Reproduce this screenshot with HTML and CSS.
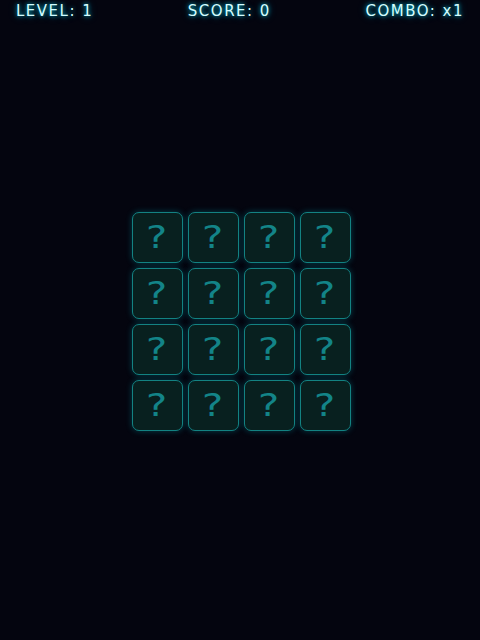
FILE: index.html
```html
<!DOCTYPE html>
<html>
<head>
<meta charset="utf-8">
<link rel="stylesheet" href="styles.css">
</head>
<body>
<div class="hud">
  <span class="stat">LEVEL: 1</span>
  <span class="stat">SCORE: 0</span>
  <span class="stat">COMBO: x1</span>
</div>
<main class="stage">
  <div class="grid">
    <div class="card"><span class="mark">?</span></div><div class="card"><span class="mark">?</span></div><div class="card"><span class="mark">?</span></div><div class="card"><span class="mark">?</span></div>
    <div class="card"><span class="mark">?</span></div><div class="card"><span class="mark">?</span></div><div class="card"><span class="mark">?</span></div><div class="card"><span class="mark">?</span></div>
    <div class="card"><span class="mark">?</span></div><div class="card"><span class="mark">?</span></div><div class="card"><span class="mark">?</span></div><div class="card"><span class="mark">?</span></div>
    <div class="card"><span class="mark">?</span></div><div class="card"><span class="mark">?</span></div><div class="card"><span class="mark">?</span></div><div class="card"><span class="mark">?</span></div>
  </div>
</main>
</body>
</html>
```
FILE: styles.css
```css
html, body {
  margin: 0;
  padding: 0;
  width: 480px;
  height: 640px;
  background: #04050f;
  overflow: hidden;
}
.hud {
  display: flex;
  justify-content: space-between;
  padding: 2px 16px 0 16px;
  height: 22px;
  font-family: "DejaVu Sans", sans-serif;
  font-size: 15px;
  line-height: 18px;
  letter-spacing: 1.5px;
  color: #d4fdff;
  text-shadow: 0 0 4px rgba(0, 230, 255, 0.8), 0 0 8px rgba(0, 200, 255, 0.4);
}
.stage {
  display: flex;
  justify-content: center;
  padding: 188px 0 0 3px;
}
.grid {
  display: grid;
  grid-template-columns: repeat(4, 51px);
  grid-auto-rows: 51px;
  gap: 5px;
}
.card {
  box-sizing: border-box;
  border: 1px solid #138282;
  border-radius: 7px;
  background: #08201f;
  box-shadow: 0 0 6px rgba(0, 200, 210, 0.3);
  display: flex;
  align-items: center;
  justify-content: center;
}
.mark {
  display: inline-block;
  font-family: "DejaVu Sans", sans-serif;
  font-size: 32px;
  line-height: 32px;
  color: #138488;
  transform: scaleX(1.25);
  margin-left: -2px;
  margin-top: -2px;
}
```
